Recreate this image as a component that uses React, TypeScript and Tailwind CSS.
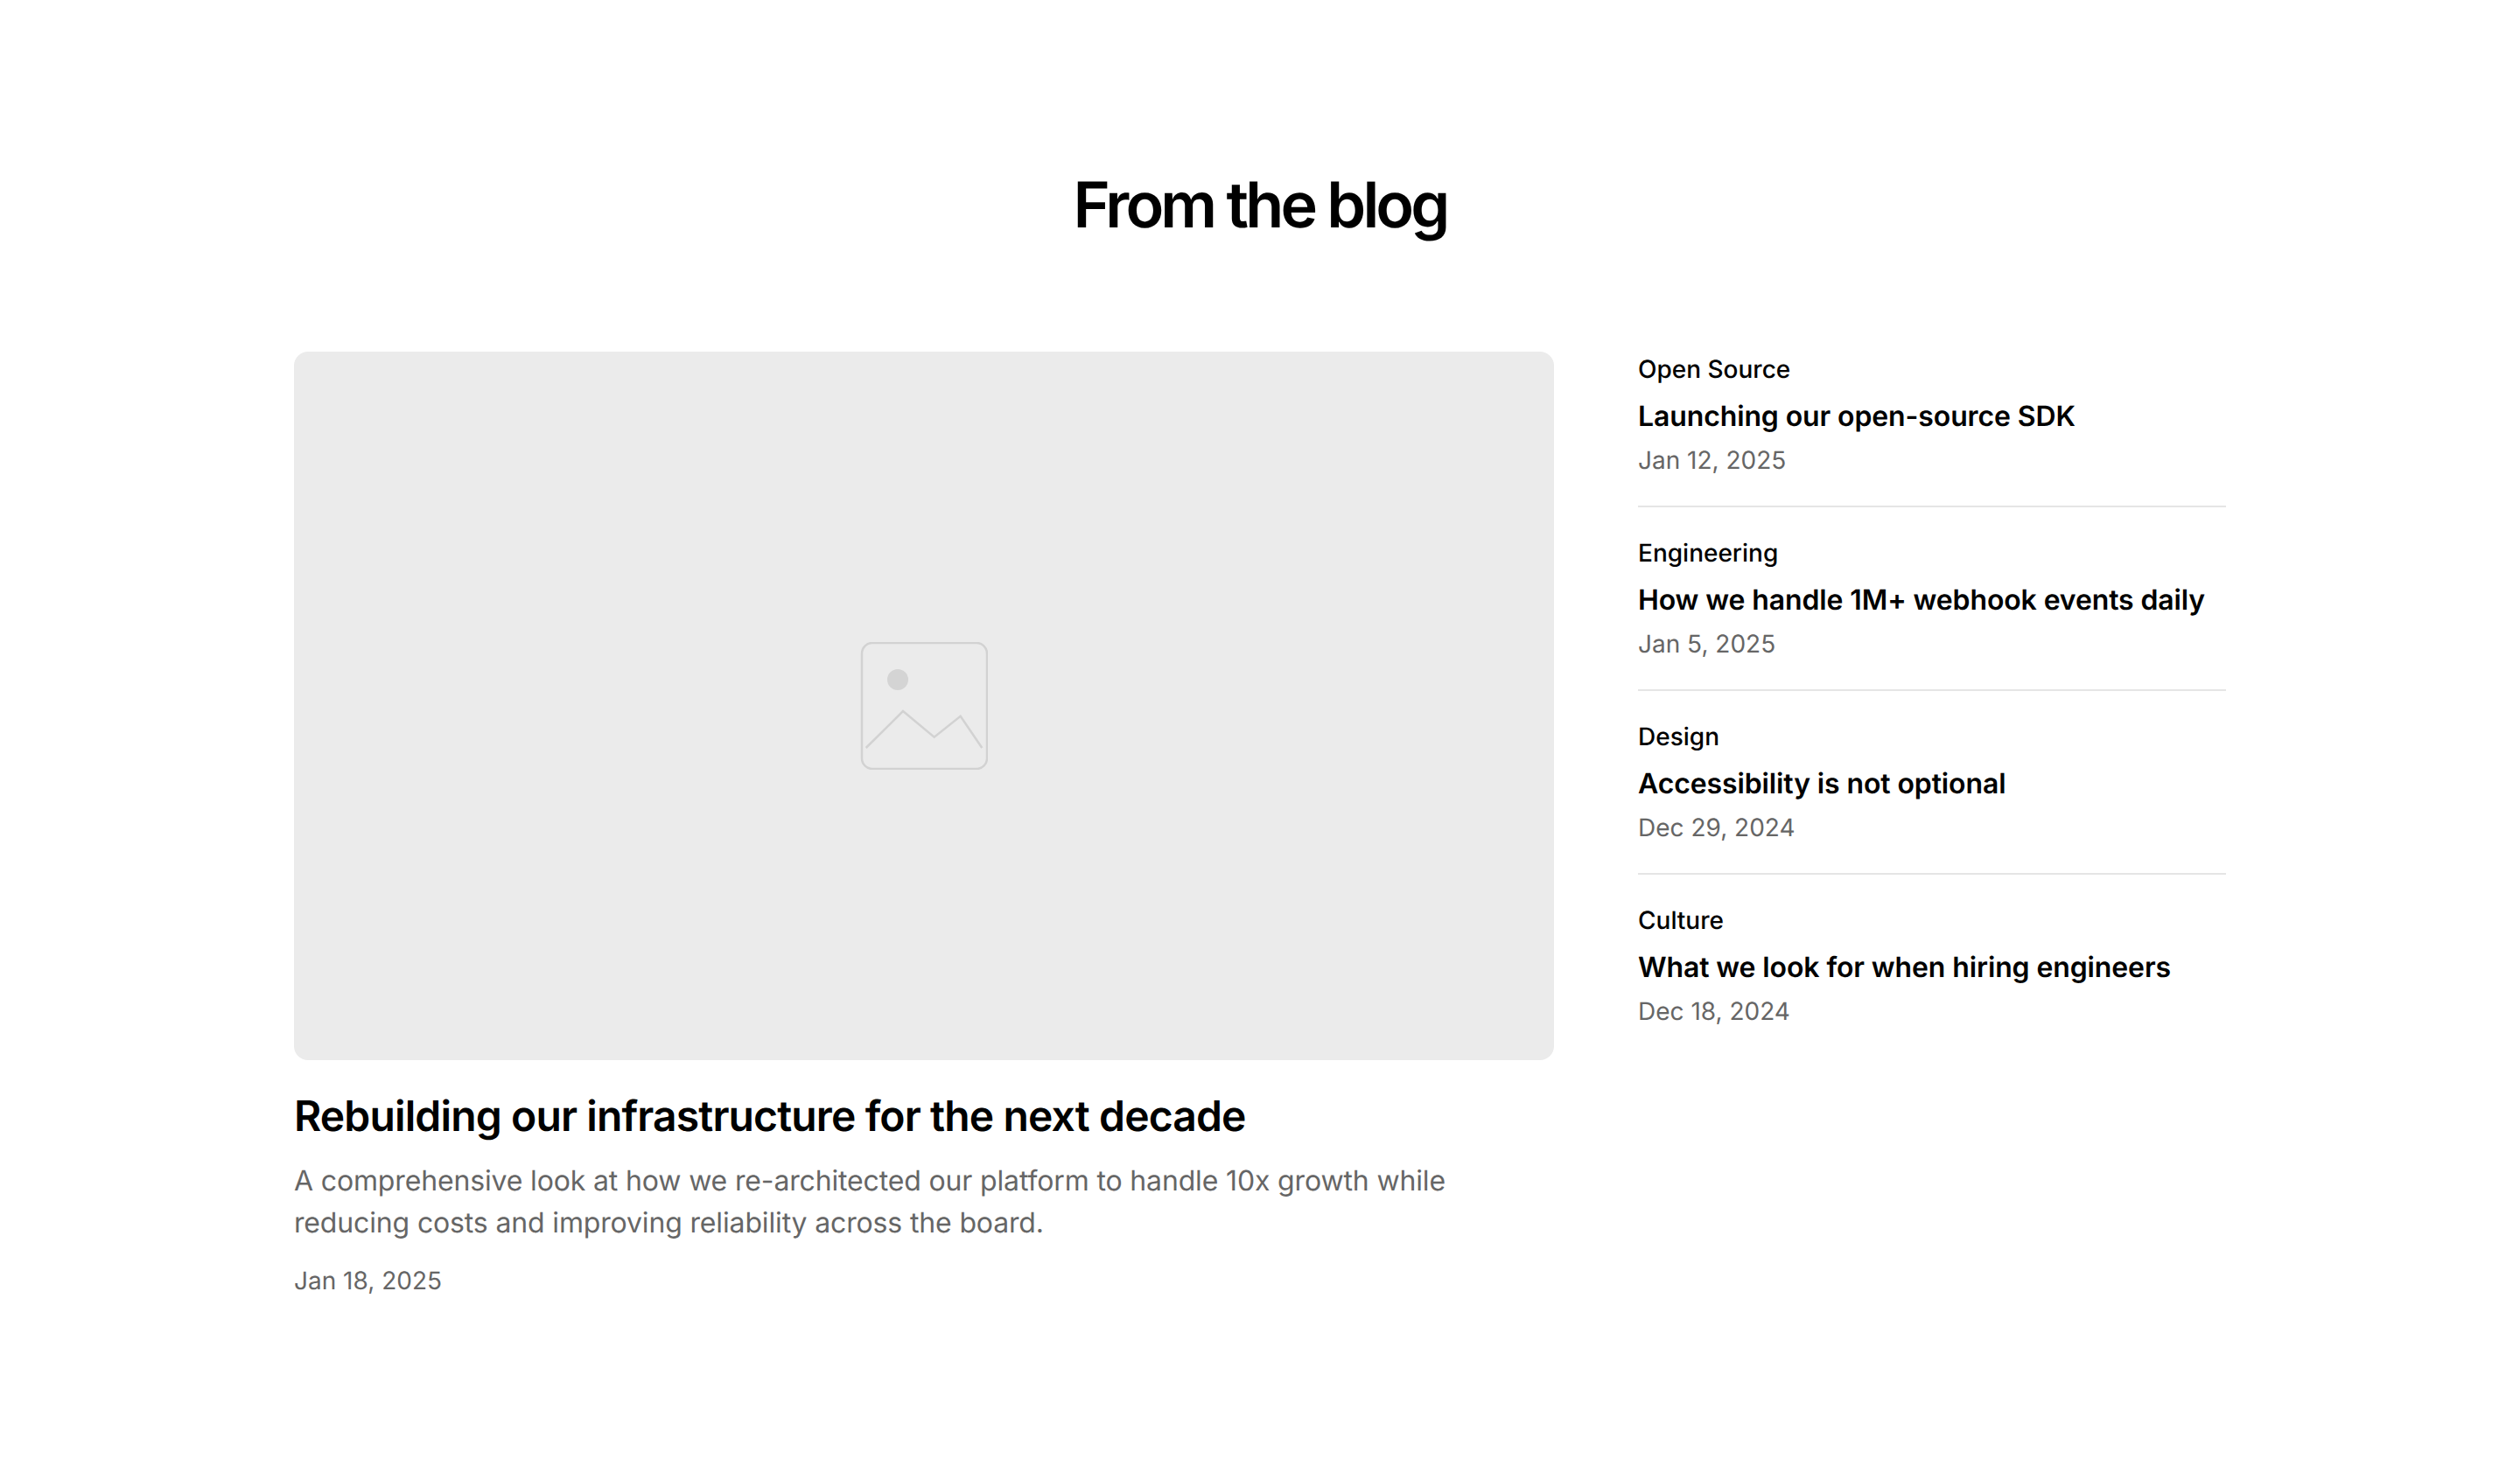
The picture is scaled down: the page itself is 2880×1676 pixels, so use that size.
const posts = [
  { cat: "Open Source", title: "Launching our open-source SDK", date: "Jan 12, 2025" },
  { cat: "Engineering", title: "How we handle 1M+ webhook events daily", date: "Jan 5, 2025" },
  { cat: "Design", title: "Accessibility is not optional", date: "Dec 29, 2024" },
  { cat: "Culture", title: "What we look for when hiring engineers", date: "Dec 18, 2024" },
];

export default function App() {
  return (
    <div className="min-h-[1676px] bg-white pt-[195px] text-black font-['Inter',sans-serif] [text-rendering:geometricPrecision]">
      <h1 className="text-center text-[72px] leading-[80px] font-semibold tracking-[-0.054em]">From the blog</h1>
      <div className="mx-auto mt-[127px] flex w-[2208px] items-start gap-[96px]">
        <article className="w-[1440px]">
          <div className="flex h-[810px] items-center justify-center rounded-[16px] bg-[#ebebeb]">
            <svg width="146" height="146" viewBox="0 0 146 146" fill="none">
              <rect x="2" y="1" width="143" height="144" rx="12" stroke="#d2d2d2" strokeWidth="2.5" />
              <circle cx="43" cy="43" r="12" fill="#d4d4d4" />
              <polyline points="6.7,121 49,79 84.7,108.7 114.7,84.7 139.3,121" stroke="#d2d2d2" strokeWidth="2.5" />
            </svg>
          </div>
          <h2 className="mt-[32px] text-[48px] leading-[64px] font-semibold tracking-[-0.018em]">Rebuilding our infrastructure for the next decade</h2>
          <p className="mt-[18px] text-[32px] leading-[48px] tracking-[-0.15px] text-[#666666]">A comprehensive look at how we re-architected our platform to handle 10x growth while reducing costs and improving reliability across the board.</p>
          <p className="mt-[22px] text-[28px] leading-[40px] text-[#666666]">Jan 18, 2025</p>
        </article>
        <div className="flex w-[672px] flex-col">
          {posts.map((p, i) => (
            <div key={p.cat} className={i < 3 ? "border-b-2 border-[#e5e5e5] pb-[32px] mb-[32px]" : ""}>
              <p className="text-[28px] leading-[40px] font-medium">{p.cat}</p>
              <h3 className="mt-[10px] text-[32px] leading-[48px] font-semibold tracking-[-0.12px]">{p.title}</h3>
              <p className="mt-[6px] text-[28px] leading-[40px] text-[#666666]">{p.date}</p>
            </div>
          ))}
        </div>
      </div>
    </div>
  );
}
